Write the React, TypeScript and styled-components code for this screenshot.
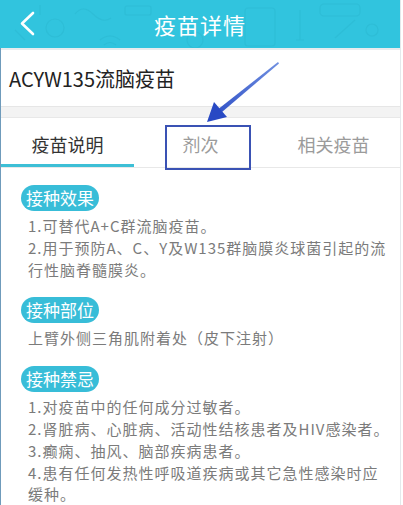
import React from 'react';
import styled, { createGlobalStyle } from 'styled-components';

const GlobalStyle = createGlobalStyle`
  html, body {
    margin: 0;
    padding: 0;
    background: #ffffff;
  }
  body {
    font-family: "Noto Sans CJK SC", "Noto Sans", sans-serif;
  }
`;

interface TabProps {
  active?: boolean;
}

interface Section {
  title: string;
  lines: string[];
}

const sections: Section[] = [
  {
    title: '接种效果',
    lines: ['1.可替代A+C群流脑疫苗。', '2.用于预防A、C、Y及W135群脑膜炎球菌引起的流', '行性脑脊髓膜炎。'],
  },
  {
    title: '接种部位',
    lines: ['上臂外侧三角肌附着处（皮下注射）'],
  },
  {
    title: '接种禁忌',
    lines: [
      '1.对疫苗中的任何成分过敏者。',
      '2.肾脏病、心脏病、活动性结核患者及HIV感染者。',
      '3.癫痫、抽风、脑部疾病患者。',
      '4.患有任何发热性呼吸道疾病或其它急性感染时应',
      '缓种。',
    ],
  },
];

const tabs = ['疫苗说明', '剂次', '相关疫苗'];

const StyledFrame = styled.div`
  position: relative;
  width: 400px;
  height: 505px;
  overflow: hidden;
  border-right: 1px solid #e4e9ec;
  background: #ffffff;
`;

const StyledHeader = styled.header`
  position: relative;
  height: 48px;
  display: flex;
  align-items: center;
  justify-content: center;
  background: #31c4de;
  overflow: hidden;
`;

const StyledPattern = styled.svg`
  position: absolute;
  inset: 0;
`;

const StyledBack = styled.svg`
  position: absolute;
  left: 18px;
  top: 11px;
`;

const StyledTitle = styled.h1`
  position: relative;
  margin: 0;
  font-size: 22px;
  font-weight: 400;
  color: #ffffff;
  letter-spacing: 1px;
`;

const StyledBody = styled.div`
  border-left: 1px solid #6f9bbb;
  height: 457px;
`;

const StyledNameRow = styled.div`
  height: 56px;
  display: flex;
  align-items: center;
  padding: 0 8px;
  border-top: 2px solid #e8ecee;
  border-bottom: 1px solid #e6e6e6;
  font-size: 20px;
  color: #222222;
`;

const StyledGap = styled.div`
  height: 10px;
  background: #f3f3f3;
  border-bottom: 1px solid #e8e8e8;
`;

const StyledTabs = styled.div`
  display: grid;
  grid-template-columns: repeat(3, 1fr);
  height: 49px;
  border-bottom: 1px solid #e8e8e8;
`;

const StyledTab = styled.div<TabProps>`
  display: flex;
  align-items: center;
  justify-content: center;
  padding-top: 2px;
  font-size: 18px;
  color: ${({ active }) => (active ? '#333333' : '#9b9b9b')};
  box-shadow: ${({ active }) => (active ? 'inset 0 -3px 0 #3dbfd6' : 'none')};
`;

const StyledContent = styled.div`
  padding: 17px 0 0 20px;
  display: flex;
  flex-direction: column;
  gap: 17px;
`;

const StyledSection = styled.section`
  display: flex;
  flex-direction: column;
  align-items: flex-start;
  gap: 4px;
`;

const StyledPill = styled.span`
  height: 26px;
  line-height: 26px;
  padding: 0 5px;
  border-radius: 13px;
  background: #38bdd8;
  color: #ffffff;
  font-size: 17px;
`;

const StyledText = styled.p`
  margin: 0;
  padding-left: 7px;
  font-size: 15px;
  letter-spacing: 1px;
  line-height: 21.8px;
  color: #7b7b7b;
  white-space: nowrap;
`;

const StyledMark = styled.div`
  position: absolute;
  left: 165px;
  top: 125px;
  width: 82px;
  height: 41px;
  border: 2px solid #3a52b4;
`;

const StyledArrow = styled.svg`
  position: absolute;
  left: 0;
  top: 0;
  pointer-events: none;
`;

const HeaderPattern = () => (
  <StyledPattern width="400" height="48" viewBox="0 0 400 48">
    <g fill="none" stroke="#1f9fb8" strokeOpacity="0.18" strokeWidth="1.2">
      <circle cx="55" cy="28" r="9" />
      <path d="M75 14 q8 -10 18 0 t18 4" />
      <rect x="125" y="6" width="26" height="9" rx="2" />
      <path d="M100 40 q10 -8 20 0 M104 45 q6 -5 12 0" />
      <rect x="245" y="8" width="30" height="38" rx="3" />
      <circle cx="195" cy="40" r="8" />
      <path d="M300 10 l0 30 M296 40 l8 0" />
      <rect x="320" y="4" width="40" height="12" rx="4" />
      <path d="M335 38 l20 -18" />
      <circle cx="372" cy="30" r="6" />
      <path d="M15 30 l10 10 M40 5 l0 10" />
    </g>
  </StyledPattern>
);

const App = (): JSX.Element => (
  <>
    <GlobalStyle />
    <StyledFrame>
      <StyledHeader>
        <HeaderPattern />
        <StyledBack width="20" height="26" viewBox="0 0 20 26">
          <path d="M15 2 L4 12.5 L15 23" fill="none" stroke="#ffffff" strokeWidth="2.6" strokeLinecap="round" strokeLinejoin="round" />
        </StyledBack>
        <StyledTitle>疫苗详情</StyledTitle>
      </StyledHeader>
      <StyledBody>
        <StyledNameRow>ACYW135流脑疫苗</StyledNameRow>
        <StyledGap />
        <StyledTabs>
          {tabs.map((tab, i) => (
            <StyledTab key={tab} active={i === 0}>{tab}</StyledTab>
          ))}
        </StyledTabs>
        <StyledContent>
          {sections.map((section) => (
            <StyledSection key={section.title}>
              <StyledPill>{section.title}</StyledPill>
              <div>
                {section.lines.map((line) => (
                  <StyledText key={line}>{line}</StyledText>
                ))}
              </div>
            </StyledSection>
          ))}
        </StyledContent>
      </StyledBody>
      <StyledMark />
      <StyledArrow width="400" height="505" viewBox="0 0 400 505">
        <defs>
          <linearGradient id="arrowFill" x1="278" y1="62" x2="207" y2="122" gradientUnits="userSpaceOnUse">
            <stop offset="0" stopColor="#6f8fe0" />
            <stop offset="1" stopColor="#2849c4" />
          </linearGradient>
        </defs>
        <polygon points="278,62 279,63.5 222,112 219,108.5" fill="url(#arrowFill)" />
        <polygon points="207,122 214,102 227,117" fill="#2849c4" />
      </StyledArrow>
    </StyledFrame>
  </>
);

export default App;
